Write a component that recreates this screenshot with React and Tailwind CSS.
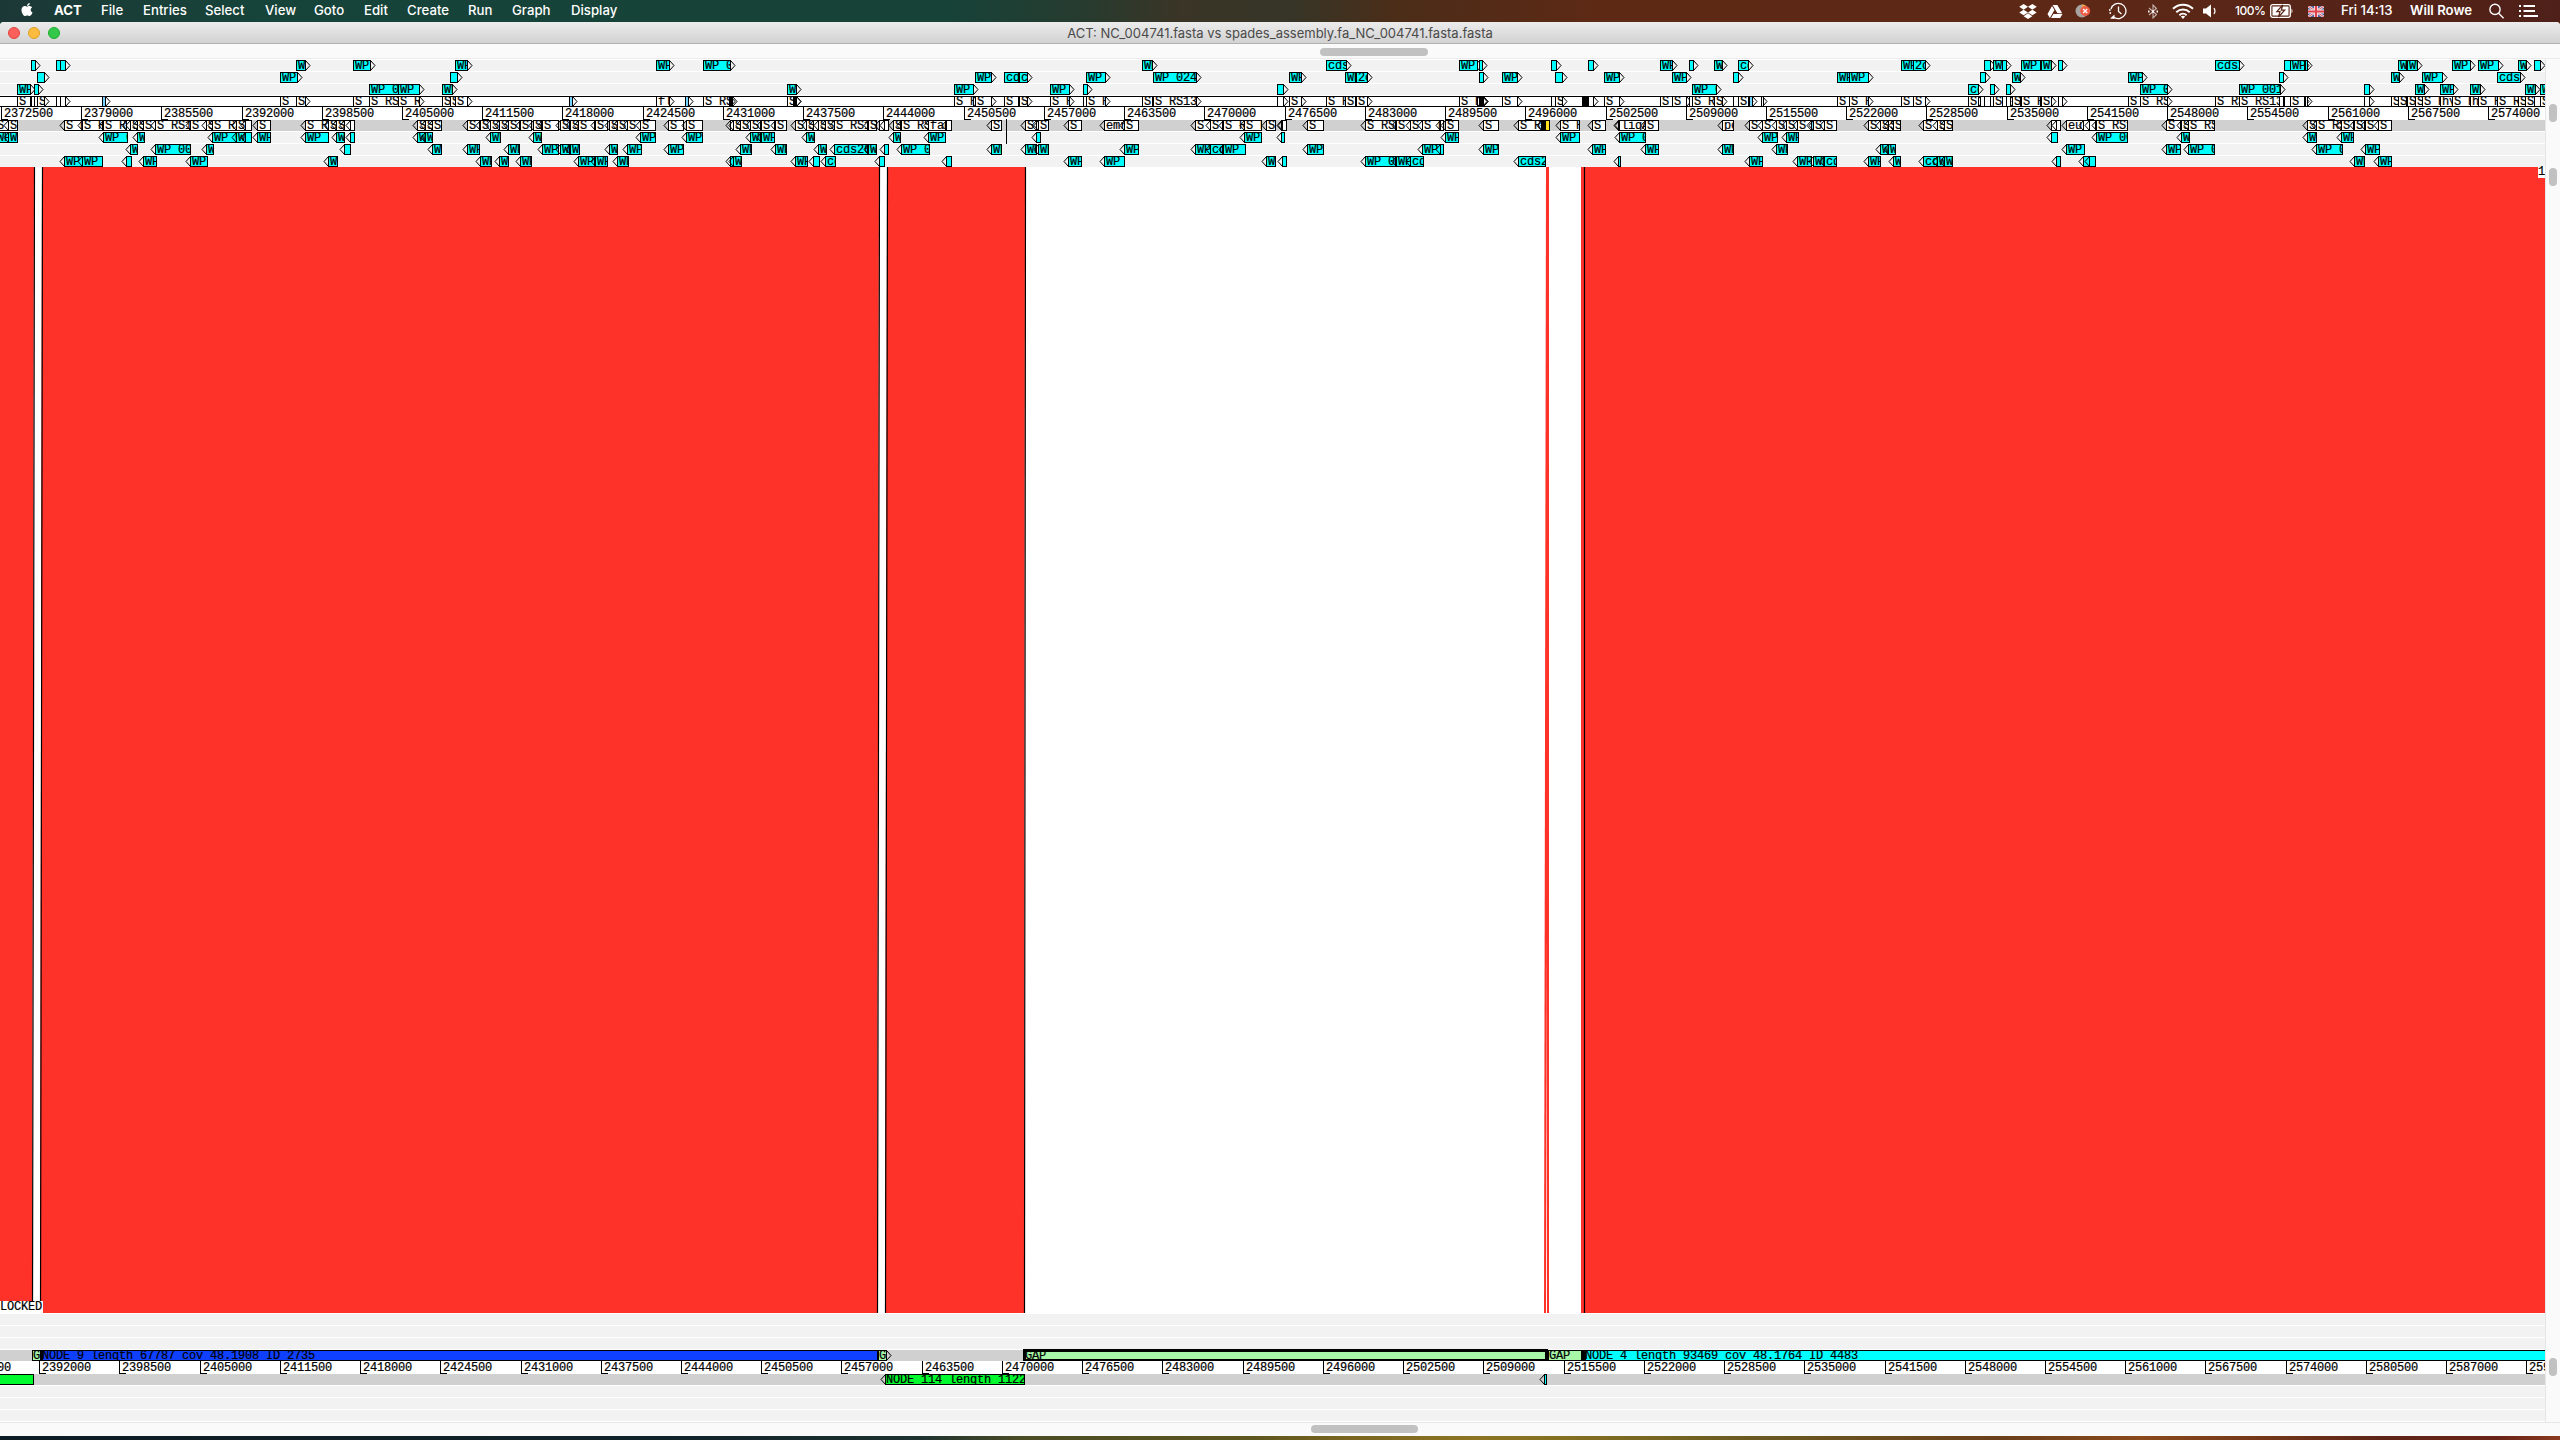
import React from "react";
import { FaApple, FaDropbox, FaGoogleDrive } from "react-icons/fa";

/* Feature tuples: [start, end, label] in view pixels */
const F1 = [
  [31, 35], [56, 60], [60, 65], [296, 305], [353, 370], [455, 467], [656, 669], [703, 730], [1142, 1152],
  [1326, 1346, "cds27"], [1459, 1477], [1479, 1482], [1551, 1556], [1588, 1593], [1660, 1672], [1689, 1693],
  [1714, 1722], [1738, 1748, "cds"], [1901, 1914], [1913, 1925, "2cds"], [1984, 1990], [1993, 2002], [2002, 2006],
  [2021, 2040], [2041, 2051], [2058, 2062], [2215, 2239, "cds28"], [2284, 2290], [2290, 2304], [2305, 2307],
  [2398, 2406], [2407, 2417], [2452, 2470], [2478, 2498], [2518, 2526], [2534, 2540],
];
const F2 = [
  [37, 44, ""], [280, 297], [450, 457, ""], [975, 991], [1004, 1018, "cds"], [1019, 1027, "cds"], [1086, 1105],
  [1153, 1196, "WP 02412"], [1289, 1301], [1345, 1355], [1356, 1367, "2cds"], [1479, 1483], [1502, 1517],
  [1555, 1562, ""], [1604, 1619], [1672, 1686], [1733, 1738], [1837, 1849], [1849, 1868], [1980, 1985], [2012, 2020],
  [2128, 2142], [2279, 2283], [2391, 2399], [2422, 2442], [2497, 2520, "cds29"],
];
const F3 = [
  [17, 30], [34, 38], [369, 398], [398, 419], [442, 452], [787, 796], [954, 973], [1050, 1069], [1083, 1087],
  [1277, 1283], [1692, 1716], [1968, 1978, "cds"], [1990, 1994], [2006, 2010], [2140, 2167], [2239, 2280],
  [2364, 2369], [2415, 2424], [2440, 2453], [2470, 2480], [2525, 2535], [2540, 2549],
];
const R1 = [
  [-5, 9], [8, 17], [103, 127], [137, 144], [212, 237], [236, 245], [245, 251], [257, 270], [305, 328], [336, 344],
  [350, 354], [417, 425], [425, 432], [490, 500], [533, 541], [640, 655], [686, 702], [750, 760], [761, 774],
  [806, 814], [893, 900], [928, 945], [1036, 1040], [1244, 1261], [1281, 1284], [1445, 1458], [1560, 1579],
  [1619, 1645], [1762, 1777], [1786, 1798], [2051, 2057], [2096, 2127], [2181, 2189], [2307, 2316], [2341, 2353],
];
const R2 = [
  [130, 137], [155, 190], [206, 213], [344, 350], [432, 441], [467, 479], [508, 519], [542, 558], [560, 569],
  [570, 579], [609, 617], [627, 641], [668, 683], [740, 751], [775, 786], [818, 826], [834, 867, "cds26"],
  [868, 876], [884, 888], [901, 929], [991, 1001], [1025, 1036], [1038, 1048], [1124, 1138], [1195, 1210],
  [1210, 1222, "cds"], [1223, 1245], [1307, 1323], [1422, 1440], [1440, 1443], [1483, 1498], [1592, 1605],
  [1645, 1658], [1722, 1733], [1776, 1787], [1880, 1888], [1888, 1895], [2066, 2084], [2166, 2180], [2188, 2214],
  [2316, 2342], [2365, 2379],
];
const R3 = [
  [64, 82], [82, 102], [126, 131], [143, 156], [190, 207], [328, 337], [480, 491], [499, 508], [520, 531],
  [578, 594], [595, 607], [617, 628], [730, 733], [733, 741], [795, 807], [813, 819], [825, 835, "cds"],
  [879, 884], [946, 951], [1068, 1081], [1104, 1124], [1266, 1275], [1282, 1286], [1365, 1395], [1396, 1410],
  [1410, 1423, "cds"], [1518, 1545, "cds27"], [1618, 1620], [1749, 1762], [1797, 1811], [1813, 1824],
  [1824, 1836, "cds"], [1868, 1880], [1893, 1900], [1923, 1937, "cds"], [1937, 1944], [1944, 1952], [2056, 2060],
  [2083, 2089], [2089, 2095], [2354, 2364], [2378, 2391],
];

const GENE_NAMES = { 656: "flgA", 928: "fadE", 1104: "emrB", 1619: "liqA", 1722: "polA", 2066: "eutR", 2440: "hyf", 2470: "has" };

function genes(rows, extra) {
  return rows
    .flat()
    .map(([a, b]) => [a, b, GENE_NAMES[a] || "S RS131"])
    .concat(extra)
    .sort((p, q) => p[0] - q[0]);
}

const FORWARD = genes([F1, F2, F3], [
  [102, 105, "", "bg-sky-300"], [569, 572, "", "bg-sky-300"], [685, 688, "", "bg-sky-300"],
  [729, 732, "", "bg-black"], [793, 796, "", "bg-black"], [1018, 1021, "", "bg-yellow-300"],
  [1480, 1483, "", "bg-black"], [1582, 1586, "", "bg-black"], [1584, 1588, "", "bg-black"],
  [1749, 1752, "", "bg-sky-300"], [1761, 1762, ""],
]);
const REVERSE = genes([R1, R2, R3], [
  [1541, 1544, "", "bg-black"], [1545, 1549, "", "bg-yellow-300"], [1811, 1814, "", "bg-sky-300"],
]);

function Feature({ f, dir, fill, text }) {
  const [a, b, label, own] = f;
  const w = b - a + 1;
  return (
    <div className="absolute top-0 h-[11px]" style={{ left: a, width: w }}>
      <div className={"h-[11px] overflow-hidden whitespace-pre border border-black pl-px leading-[11px] " + (own || fill)}>
        {w >= 8 ? (label ?? text) : ""}
      </div>
      <svg
        className={dir === "f" ? "absolute left-full top-0 -ml-px" : "absolute right-full top-0 -mr-px"}
        width="6" height="11" viewBox="0 0 6 11"
      >
        <path d={dir === "f" ? "M0.5 0.5 L5 5.5 L0.5 10.5" : "M5.5 0.5 L1 5.5 L5.5 10.5"} fill="none" stroke="#000" strokeWidth="1" />
      </svg>
    </div>
  );
}

function Lane({ items = [], dir, fill = "bg-[#00ffff]", text = "WP 001234", bg = "bg-[#f2f2f2]" }) {
  return (
    <div className="h-3 shrink-0 bg-white">
      <div className={"relative h-[11px] overflow-hidden " + bg}>
        {items.map((f, i) => (
          <Feature key={i} f={f} dir={dir} fill={fill} text={text} />
        ))}
      </div>
    </div>
  );
}

function Ruler({ start, first, count }) {
  return (
    <div className="relative h-[13px] shrink-0 overflow-hidden bg-white">
      {Array.from({ length: count }, (_, i) => (
        <div key={i} className="absolute top-0 h-[13px] border-l border-black pl-[2px] leading-[15px]" style={{ left: Math.floor(start + 80.235 * i) }}>
          {first + 6500 * i}
          <div className="absolute bottom-0 left-0 h-px w-[6px] bg-black" />
        </div>
      ))}
    </div>
  );
}

const MENU = [
  ["File", "w-[42px]"], ["Entries", "w-[62px]"], ["Select", "w-[60px]"], ["View", "w-[49px]"], ["Goto", "w-[50px]"],
  ["Edit", "w-[43px]"], ["Create", "w-[61px]"], ["Run", "w-[44px]"], ["Graph", "w-[59px]"], ["Display", "w-[60px]"],
];

function MenuBar() {
  return (
    <div className="flex h-[22px] shrink-0 items-center bg-[linear-gradient(90deg,#1c3836_0px,#16443a_260px,#174238_950px,#263b2f_1080px,#3a3526_1180px,#363527_1290px,#4c2d18_1400px,#5d2915_1600px,#5d2816_2100px,#4f2019_2560px)] pl-[20px] font-['Inter','Noto_Sans',sans-serif] text-[13.2px] font-medium text-white">
      <FaApple className="-mt-[3px] h-[15px] w-[14px]" />
      <div className="ml-[20px] w-[47px] font-bold">ACT</div>
      {MENU.map(([t, w]) => (
        <div key={t} className={w}>{t}</div>
      ))}
      <div className="ml-auto flex h-full w-[541px] items-center">
        <div className="w-[28px]"><FaDropbox className="h-[17px] w-[18px]" /></div>
        <div className="w-[28px]"><FaGoogleDrive className="h-[15px] w-[16px]" /></div>
        <div className="w-[33px]">
          <svg width="16" height="16" viewBox="0 0 16 16">
            <circle cx="7" cy="8" r="6.5" fill="#a7a3a0" />
            <path d="M7 1.5 A6.5 6.5 0 0 1 13 6 L7 8Z" fill="#efb04a" />
            <circle cx="10.2" cy="8" r="5" fill="#ee5b45" />
            <path d="M8.2 6l4 4M12.2 6l-4 4" stroke="#fff" strokeWidth="1.4" />
          </svg>
        </div>
        <div className="w-[39px]">
          <svg width="20" height="18" viewBox="0 0 20 18" fill="none" stroke="#fff" strokeWidth="1.3">
            <path d="M3 7 A7.6 7.6 0 1 1 6 15.2" />
            <path d="M10.5 4.5v5l3 2.5" />
            <path d="M1.8 8v.1M2.3 11v.1" strokeWidth="1.8" strokeLinecap="round" />
            <path d="M2 16.5 L6.5 12.5 V17Z" fill="#fff" stroke="none" />
          </svg>
        </div>
        <div className="w-[25px]">
          <svg width="12" height="17" viewBox="0 0 12 17" fill="none" stroke="#c9b5ae" strokeWidth="1.1">
            <path d="M2 5l7.5 6.5L6 15V2l3.5 3.5L2 12" />
            <path d="M1 8.5h1.5M5 8.5h2M9.5 8.5H11" stroke="#fff" strokeWidth="2" />
          </svg>
        </div>
        <div className="w-[31px]">
          <svg width="22" height="17" viewBox="0 0 22 17" fill="none" stroke="#fff" strokeWidth="1.9">
            <path d="M1 5.8 A14.3 14.3 0 0 1 21 5.8" />
            <path d="M4.3 9.2 A9.6 9.6 0 0 1 17.7 9.2" />
            <path d="M7.4 12.2 A5.2 5.2 0 0 1 14.6 12.2" />
            <path d="M8.8 13.4 Q11 11.9 13.2 13.4 L11 15.9Z" fill="#fff" stroke="none" />
          </svg>
        </div>
        <div className="w-[32px]">
          <svg width="14" height="14" viewBox="0 0 14 14">
            <path d="M0 4.5h3L8 .5v13L3 9.5H0Z" fill="#fff" />
            <path d="M11 4 Q13 7 11 10" fill="none" stroke="#fff" strokeWidth="1.2" />
          </svg>
        </div>
        <div className="w-[35px] text-[12px] tracking-[-0.5px]">100%</div>
        <div className="w-[38px]">
          <svg width="24" height="14" viewBox="0 0 24 14">
            <rect x="0.7" y="0.7" width="19.6" height="12.6" rx="2" fill="none" stroke="#fff" strokeWidth="1.3" />
            <rect x="2.5" y="2.5" width="16" height="9" fill="#fff" />
            <path d="M21.5 4.5 Q23.5 7 21.5 9.5Z" fill="#fff" />
            <path d="M12.8 1 L6.8 7.7 H10 L8.5 13 L14.7 6.2 H11.3Z" fill="#fff" stroke="#5a2518" strokeWidth="1.2" />
          </svg>
        </div>
        <div className="w-[33px]">
          <svg width="16" height="11" viewBox="0 0 16 11">
            <rect width="16" height="11" fill="#4a5f9e" />
            <path d="M0 0L16 11M16 0L0 11" stroke="#f0e4e6" strokeWidth="2.4" />
            <path d="M0 0L16 11M16 0L0 11" stroke="#dd4450" strokeWidth="0.9" />
            <path d="M8 0V11M0 5.5H16" stroke="#f4e8ea" strokeWidth="4" />
            <path d="M8 0V11M0 5.5H16" stroke="#e0404c" strokeWidth="2.2" />
          </svg>
        </div>
        <div className="w-[69px] whitespace-nowrap">Fri 14:13</div>
        <div className="w-[79px] whitespace-nowrap font-semibold">Will Rowe</div>
        <div className="w-[30px]">
          <svg width="16" height="16" viewBox="0 0 16 16" fill="none" stroke="#fff" strokeWidth="1.4">
            <circle cx="6" cy="6.4" r="5.1" />
            <path d="M9.6 10.2L14.6 15.2" />
          </svg>
        </div>
        <svg className="shrink-0" width="19" height="12" viewBox="0 0 19 12" stroke="#fff" strokeWidth="2">
          <path d="M0 1H2M4.500 1H16M0 6H2M4.500 6H16M0 11H2M4.500 11H19" />
        </svg>
      </div>
    </div>
  );
}

function Comparison() {
  return (
    <div className="relative h-[1146px] shrink-0 bg-white">
      <svg className="block" width="2545" height="1146" viewBox="0 0 2545 1146">
        <g fill="#ff3229">
          <polygon points="0,0 34,0 32,1146 0,1146" />
          <polygon points="42,0 879,0 877,1146 40,1146" />
          <polygon points="887,0 1025,0 1024,1146 885,1146" />
          <polygon points="1546,0 1549,0 1546,1146 1544,1146" />
          <polygon points="1547,0 1549,0 1549,1146 1547,1146" />
          <rect x="1581" y="0" width="964" height="1146" />
        </g>
        <g stroke="#000" strokeWidth="1.2">
          <path d="M34.500 0L32.500 1146M42.500 0L40.500 1146M879.500 0L877.500 1146M887.500 0L885.500 1146M1025.500 0L1024.500 1146M1584.500 0V1146" />
        </g>
      </svg>
      <div className="absolute bottom-0 left-0 h-3 w-[43px] bg-white leading-[13px]">LOCKED</div>
      <div className="absolute right-0 top-0 h-[11px] w-[7px] bg-white leading-[11px]">1</div>
    </div>
  );
}

function ContigTracks() {
  return (
    <>
      <div className="h-3 shrink-0 bg-white">
        <div className="relative h-[11px] bg-[#d0d0d0]">
          <div className="absolute left-[32px] top-0 h-[11px] w-[9px] overflow-hidden border border-black bg-[#a8f7a8] leading-[11px]">G</div>
          <div className="absolute left-[40px] top-0 h-[11px] w-[838px] border border-l-[3px] border-black bg-[#1040ff] leading-[11px]">
            <span className="-ml-px">NODE 9 length 67787 cov 48.1908 ID 2735</span>
          </div>
          <div className="absolute left-[877px] top-0 h-[11px] w-[10px] overflow-hidden border border-l-2 border-black bg-[#a8f7a8] leading-[11px]">G</div>
          <svg className="absolute left-[886px] top-0" width="6" height="11"><path d="M0.5 0.5L5 5.5L0.5 10.5" fill="none" stroke="#000" /></svg>
          <div className="absolute left-[1546px] top-0 h-[11px] w-[38px] border border-l-[3px] border-black bg-[#a8f7a8] leading-[11px]">GAP</div>
          <div className="absolute left-[1581px] top-0 h-[11px] w-[970px] border border-l-[5px] border-black bg-[#00ffff] leading-[11px]">
            <span className="-ml-px">NODE 4 length 93469 cov 48.1764 ID 4483</span>
          </div>
          <div className="absolute -top-px left-[1023px] h-[13px] w-[525px] border-[3px] border-black bg-[#a8f7a8] leading-[9px]">
            <span className="-ml-px">GAP</span>
          </div>
        </div>
      </div>
      <div className="-mt-px"><Ruler start={-40.6} first={2385500} count={33} /></div>
      <div className="h-3 shrink-0 bg-white">
        <div className="relative h-[11px] bg-[#d0d0d0]">
          <div className="absolute -left-1 top-0 h-[11px] w-[38px] border border-black bg-[#00fa2e]" />
          <svg className="absolute left-[880px] top-0" width="6" height="11"><path d="M5.500 0.5L1 5.5L5.500 10.5" fill="none" stroke="#000" /></svg>
          <div className="absolute left-[885px] top-0 h-[11px] w-[140px] overflow-hidden whitespace-nowrap border border-black bg-[#00fa2e] leading-[11px]">
            NODE 114 length 11221
          </div>
          <svg className="absolute left-[1539px] top-0" width="6" height="11"><path d="M5.500 0.5L1 5.5L5.500 10.5" fill="none" stroke="#000" /></svg>
          <div className="absolute left-[1544px] top-0 h-[11px] w-[3px] border border-black bg-[#00ffff]" />
        </div>
      </div>
    </>
  );
}

export default function App() {
  return (
    <div className="flex h-[1440px] w-[2560px] flex-col overflow-hidden bg-[#16443a]">
      <MenuBar />
      <div className="h-[1414px] shrink-0 bg-[linear-gradient(90deg,#16443a,#5d2915)]">
        <div className="flex h-full flex-col overflow-hidden rounded-t-[4px] bg-[#fafafa]">
          <div className="relative flex h-[22px] shrink-0 items-center border-b border-[#b1b1b1] bg-linear-to-b from-[#ececec] to-[#d2d2d2] pl-[8px]">
            <div className="flex gap-2">
              <div className="size-3 rounded-full border border-[#e0443e] bg-[#fc605b]" />
              <div className="size-3 rounded-full border border-[#dea123] bg-[#fdbc40]" />
              <div className="size-3 rounded-full border border-[#1dad2b] bg-[#34c84a]" />
            </div>
            <div className="absolute inset-x-0 pt-[2px] text-center font-['Inter','Noto_Sans',sans-serif] text-[13px] text-[#4a4a4a]">
              ACT: NC_004741.fasta vs spades_assembly.fa_NC_004741.fasta.fasta
            </div>
          </div>
          <div className="h-[15px] shrink-0 border-b border-[#ebebeb] pt-[4px]">
            <div className="ml-[1320px] h-2 w-[108px] rounded-full bg-[#c1c1c1]" />
          </div>
          <div className="flex h-[1363px] shrink-0">
            <div className="relative flex w-[2545px] flex-col overflow-hidden bg-white pt-px font-['Liberation_Mono',monospace] text-[12px] tracking-[-0.2px] text-black [-webkit-text-stroke:0.2px_black]">
              <Lane items={F1} dir="f" />
              <Lane items={F2} dir="f" />
              <Lane items={F3} dir="f" />
              <div className="relative h-[11px] shrink-0 border-y border-black bg-white">
                <div className="absolute inset-x-0 -top-px h-[11px]">
                  {FORWARD.map((f, i) => (
                    <Feature key={i} f={f} dir="f" fill="bg-white" />
                  ))}
                </div>
              </div>
              <Ruler start={1.3} first={2372500} count={32} />
              <Lane items={REVERSE} dir="r" fill="bg-white" bg="bg-[#d0d0d0]" />
              <Lane items={R1} dir="r" />
              <Lane items={R2} dir="r" />
              <Lane items={R3} dir="r" />
              <div className="absolute left-[1006px] top-[60px] h-[25px] w-px bg-black" />
              <div className="-mt-px"><Comparison /></div>
              <div className="h-px shrink-0 bg-white" />
              <Lane />
              <Lane />
              <Lane />
              <ContigTracks />
              <Lane />
              <Lane />
              <Lane />
            </div>
            <div className="relative w-[15px] border-l border-[#e6e6e6] bg-[#fafafa]">
              <div className="absolute left-[3px] top-[45px] h-[18px] w-2 rounded-full bg-[#c1c1c1]" />
              <div className="absolute left-[3px] top-[109px] h-[18px] w-2 rounded-full bg-[#c1c1c1]" />
              <div className="absolute left-[3px] top-[1299px] h-[18px] w-2 rounded-full bg-[#c1c1c1]" />
            </div>
          </div>
          <div className="grow border-t border-[#e6e6e6] pt-[2px]">
            <div className="ml-[1311px] h-2 w-[107px] rounded-full bg-[#c1c1c1]" />
          </div>
        </div>
      </div>
      <div className="grow bg-[linear-gradient(90deg,#0c1c24_0px,#12242b_700px,#1e3230_920px,#4a4c25_1020px,#5d5620_1250px,#7a6520_1350px,#8d7424_1470px,#857022_1560px,#6a5a22_1750px,#6a3f1c_2000px,#8a4a1c_2140px,#5e2517_2380px,#6a2417_2500px,#8a3a20_2560px)]" />
    </div>
  );
}
